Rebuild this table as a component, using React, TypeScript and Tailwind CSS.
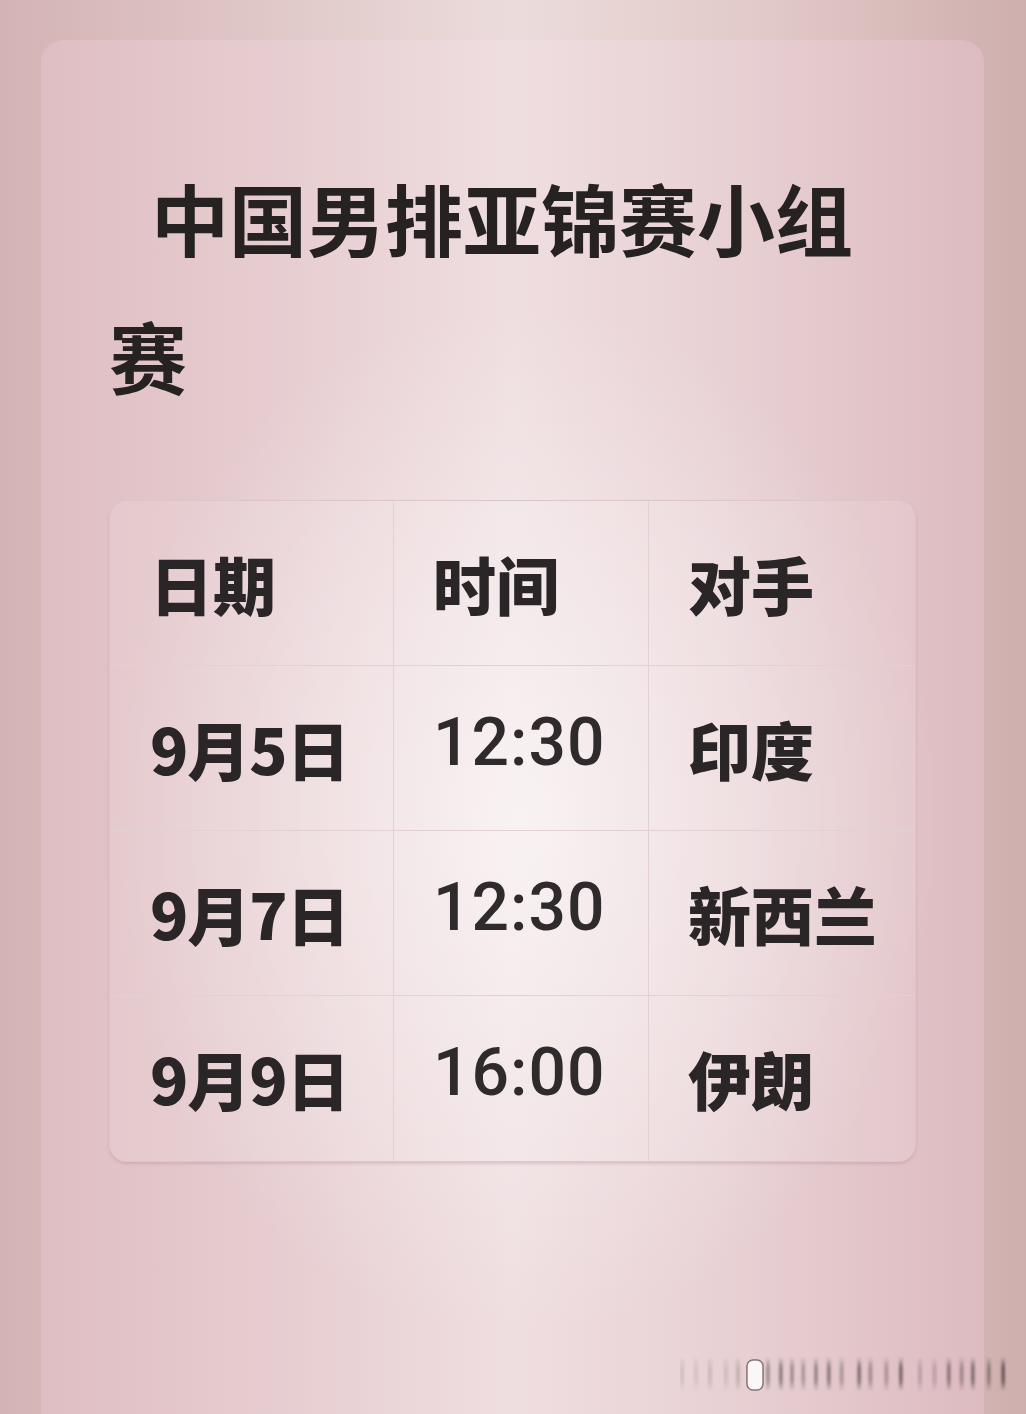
import React from "react";

const rows = [
  { d: "9月5日", t: "12:30", o: "印度" },
  { d: "9月7日", t: "12:30", o: "新西兰" },
  { d: "9月9日", t: "16:00", o: "伊朗" },
];

const cjk = "font-['Noto_Sans_CJK_SC',_'Noto_Sans',_sans-serif]";

function Watermark() {
  const pre: [number, number][] = [[0, 0.12], [14, 0.1], [28, 0.15], [44, 0.12], [56, 0.18]];
  const post: [number, number][] = [
    [84, 0.35], [100, 0.45], [114, 0.35], [128, 0.3], [144, 0.4], [160, 0.45], [176, 0.3],
    [198, 0.5], [212, 0.35], [232, 0.3], [250, 0.55], [274, 0.2], [292, 0.2], [310, 0.45],
    [326, 0.35], [340, 0.5], [360, 0.4], [378, 0.6],
  ];
  const bars = [...pre, ...post.map(([x, o]) => [86 + (x - 84) * 0.8, o] as [number, number])];
  return (
    <svg width="330" height="40" viewBox="0 0 330 40">
      <defs>
        <filter id="blurx" x="-20%" y="-20%" width="140%" height="140%">
          <feGaussianBlur stdDeviation="1 3.5" />
        </filter>
      </defs>
      <g filter="url(#blurx)">
        {bars.map(([x, o], i) => (
          <rect key={i} x={x} y={6} width={4} height={24} fill="#3a2f30" opacity={o} />
        ))}
      </g>
      <rect x={67} y={4} width={16} height={30} rx={6} fill="#fbf6f7" stroke="#3a2f30" strokeOpacity={0.6} strokeWidth={1.5} />
    </svg>
  );
}

export default function App() {
  return (
    <div className="relative w-[1026px] h-[1414px] overflow-hidden bg-[linear-gradient(90deg,#d4b3b4_0%,#e2cbcb_30%,#ebdcdb_50%,#e1c9c8_75%,#ceafad_100%)] pt-[40px] pl-[41px] pr-[42px]">
      <div className="h-full rounded-t-[22px] bg-[radial-gradient(ellipse_420px_520px_at_480px_780px,rgba(255,255,255,0.55)_0%,rgba(255,255,255,0)_100%),linear-gradient(90deg,#dfbec3_0%,#e8d0d3_30%,#efdee0_50%,#e8d1d4_72%,#ddbbc0_100%)] pt-[108px] px-[68px]">
        <h1
          className={`${cjk} font-bold text-[78px] leading-[138px] text-[#262222] indent-[42px]`}
        >
          中国男排亚锦赛小组赛
        </h1>
        <div className="mt-[76px] rounded-[18px] border border-[#dcc6c8] bg-white/10 shadow-[0_2px_3px_rgba(150,110,115,0.25)] overflow-hidden">
          <div className="grid grid-cols-[284px_255px_1fr]">
            {["日期", "时间", "对手"].map((c, j) => (
              <div
                key={j}
                className={`h-[165px] flex items-center ${j === 0 ? "pl-[40px]" : "pl-[39px]"} ${j < 2 ? "border-r" : ""} border-b border-[#e3d0d2] ${cjk} font-black text-[63px] text-[#2a2526]`}
              >
                {c}
              </div>
            ))}
            {rows.map((r, i) => (
              <React.Fragment key={i}>
                <div
                  className={`h-[165px] flex items-center pl-[40px] border-r ${i < 2 ? "border-b" : ""} border-[#e3d0d2] ${cjk} font-black text-[63px] tracking-[-1px] text-[#2a2526]`}
                >
                  {r.d}
                </div>
                <div
                  className={`h-[165px] flex items-center pl-[39px] pb-[12px] border-r ${i < 2 ? "border-b" : ""} border-[#e3d0d2] font-['Roboto',_'Noto_Sans',_sans-serif] font-medium text-[66px] tracking-[1px] text-[#2f2a2b]`}
                >
                  {r.t}
                </div>
                <div
                  className={`h-[165px] flex items-center pl-[39px] ${i < 2 ? "border-b" : ""} border-[#e3d0d2] ${cjk} font-black text-[63px] text-[#2a2526]`}
                >
                  {r.o}
                </div>
              </React.Fragment>
            ))}
          </div>
        </div>
      </div>
      <div className="absolute left-[680px] top-[1356px]">
        <Watermark />
      </div>
    </div>
  );
}
